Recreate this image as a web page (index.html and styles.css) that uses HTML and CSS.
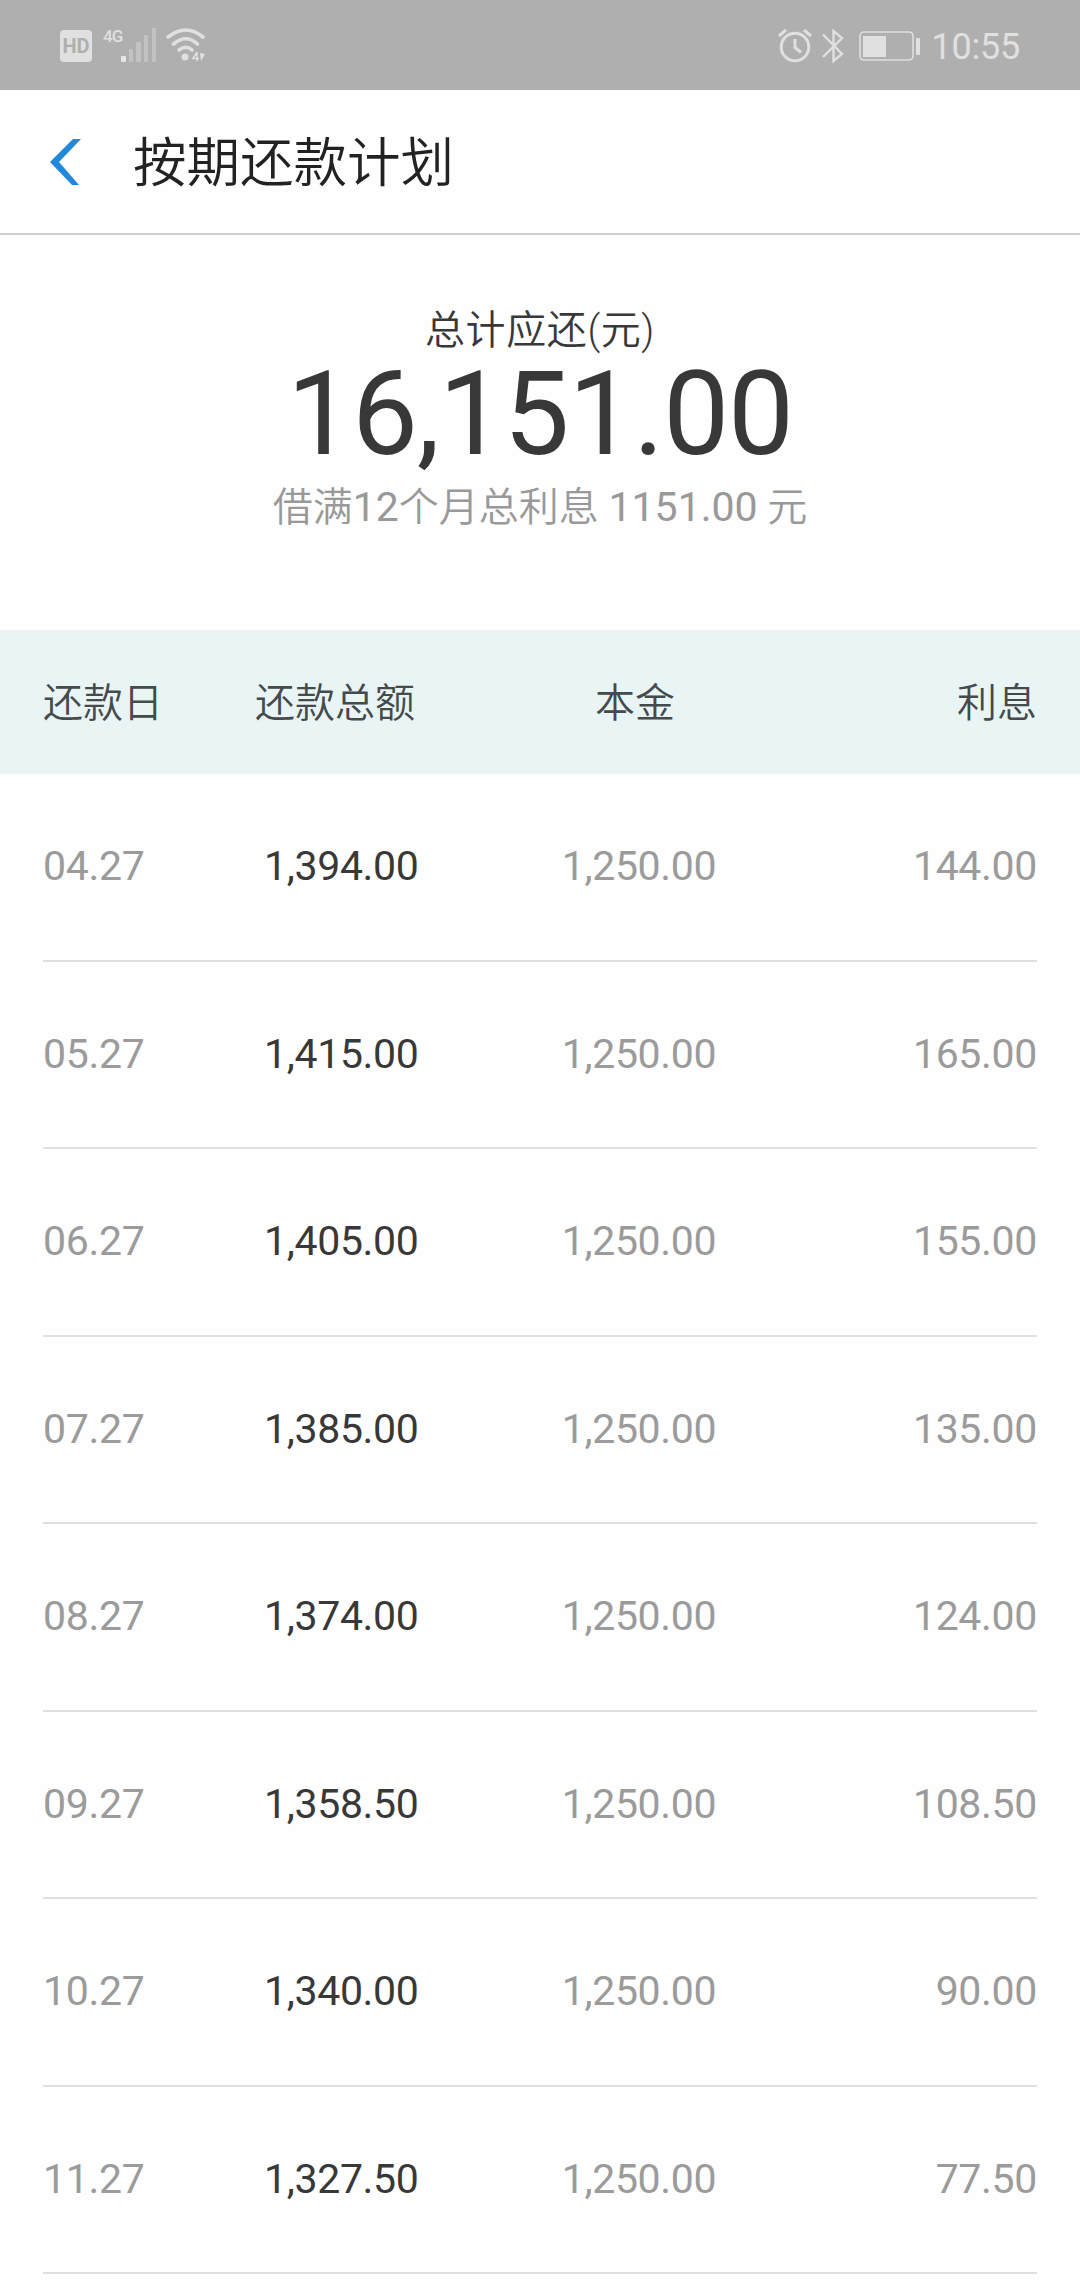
FILE: index.html
```html
<!DOCTYPE html>
<html lang="zh-CN">
<head>
  <meta charset="UTF-8">
  <meta name="viewport" content="width=device-width, initial-scale=1.0">
  <title>按期还款计划</title>
  <link rel="stylesheet" href="styles.css">
</head>
<body>

  <!-- Status bar -->
  <div class="status-bar">
    <div class="status-left">
      <span class="hd-badge">HD</span>
      <div class="signal">
        <span class="network">4G</span>
        <svg width="36" height="34" viewBox="0 0 36 34">
          <rect class="on" x="0" y="28" width="5" height="6" rx="1"/>
          <rect x="8" y="21" width="4" height="13"/>
          <rect x="15" y="14" width="5" height="20"/>
          <rect x="23" y="7" width="4" height="27"/>
          <rect x="31" y="0" width="4" height="34"/>
        </svg>
      </div>
      <svg class="wifi" width="40" height="34" viewBox="0 0 40 34">
        <g fill="none" stroke="#e0e0e0" stroke-width="3.6" stroke-linecap="round">
          <path d="M2 9Q20 -5 37 9"/>
          <path d="M7.500 16Q20 5.500 31.500 16"/>
          <path d="M13 22Q20 16.500 26 22"/>
        </g>
        <circle cx="19" cy="29" r="3.500" fill="#e0e0e0"/>
        <path d="M31 24v9M31 24l-4 6.500h6" fill="none" stroke="#e0e0e0" stroke-width="1.500"/>
        <path d="M34 25l5 1-4 7z" fill="#e0e0e0"/>
      </svg>
    </div>
    <div class="status-right">
      <svg class="alarm" width="34" height="36" viewBox="0 0 34 36">
        <g fill="none" stroke="#e0e0e0" stroke-width="3">
          <circle cx="17" cy="19" r="13.800"/>
          <path d="M17 11v8.500l6 5M1 8l7-6M33 8l-7-6"/>
        </g>
      </svg>
      <svg class="bluetooth" width="22" height="36" viewBox="0 0 22 36">
        <path d="M1 6.500L20 26 11.500 33V3L20 10 1 29" fill="none" stroke="#e0e0e0" stroke-width="2.400"/>
      </svg>
      <svg class="battery" width="62" height="30" viewBox="0 0 62 30">
        <rect x="1" y="1" width="53" height="28" rx="4" fill="none" stroke="#e0e0e0" stroke-width="1.600"/>
        <rect x="4" y="5" width="23" height="21" fill="#e0e0e0"/>
        <rect x="57" y="7" width="4" height="17" rx="1" fill="#e0e0e0"/>
      </svg>
      <span class="clock">10:55</span>
    </div>
  </div>

  <!-- Title bar -->
  <div class="title-bar">
    <svg class="back" width="32" height="48" viewBox="0 0 32 48">
      <path d="M31 1L9 24 29 47H22L0 24 23 1z" fill="#2089dc"/>
    </svg>
    <h1>按期还款计划</h1>
  </div>

  <!-- Total -->
  <div class="summary">
    <p class="summary-label">总计应还(元)</p>
    <p class="summary-amount">16,151.00</p>
    <p class="summary-note">借满<span>12</span>个月总利息 <span>1151.00</span> 元</p>
  </div>

  <!-- Repayment plan -->
  <div class="plan-head">
    <span>还款日</span>
    <span class="total">还款总额</span>
    <span class="principal">本金</span>
    <span class="interest">利息</span>
  </div>
  <div class="plan-list">
    <div class="plan-row">
      <span>04.27</span>
      <span class="total">1,394.00</span>
      <span class="principal">1,250.00</span>
      <span class="interest">144.00</span>
    </div>
    <div class="plan-row">
      <span>05.27</span>
      <span class="total">1,415.00</span>
      <span class="principal">1,250.00</span>
      <span class="interest">165.00</span>
    </div>
    <div class="plan-row">
      <span>06.27</span>
      <span class="total">1,405.00</span>
      <span class="principal">1,250.00</span>
      <span class="interest">155.00</span>
    </div>
    <div class="plan-row">
      <span>07.27</span>
      <span class="total">1,385.00</span>
      <span class="principal">1,250.00</span>
      <span class="interest">135.00</span>
    </div>
    <div class="plan-row">
      <span>08.27</span>
      <span class="total">1,374.00</span>
      <span class="principal">1,250.00</span>
      <span class="interest">124.00</span>
    </div>
    <div class="plan-row">
      <span>09.27</span>
      <span class="total">1,358.50</span>
      <span class="principal">1,250.00</span>
      <span class="interest">108.50</span>
    </div>
    <div class="plan-row">
      <span>10.27</span>
      <span class="total">1,340.00</span>
      <span class="principal">1,250.00</span>
      <span class="interest">90.00</span>
    </div>
    <div class="plan-row">
      <span>11.27</span>
      <span class="total">1,327.50</span>
      <span class="principal">1,250.00</span>
      <span class="interest">77.50</span>
    </div>
  </div>

</body>
</html>
```
FILE: styles.css
```css
* {
  box-sizing: border-box;
}

body {
  margin: 0;
  height: 2280px;
  overflow: hidden;
  background-color: #fefefe;
  color: #383838;
  font-family: Roboto, "Noto Sans CJK SC", sans-serif;
}

p,
h1 {
  margin: 0;
}

/* Status bar */
.status-bar {
  display: flex;
  justify-content: space-between;
  height: 90px;
  padding: 28px 60px 0 60px;
  background-color: #afafaf;
  color: #e0e0e0;
}

.status-left,
.status-right {
  display: flex;
  align-items: flex-start;
}

.hd-badge {
  width: 32px;
  height: 32px;
  margin-top: 2px;
  border-radius: 4px;
  background-color: #e0e0e0;
  color: #afafaf;
  font-size: 20px;
  font-weight: 700;
  line-height: 32px;
  text-align: center;
}

.signal {
  display: flex;
  margin-left: 11px;
}

.network {
  width: 18px;
  font-size: 17px;
  font-weight: 500;
  line-height: 16px;
  letter-spacing: -1px;
}

.signal rect {
  fill: #c2c2c2;
}

.signal .on {
  fill: #e6e6e6;
}

.wifi {
  margin-left: 9px;
}

.bluetooth {
  margin-left: 10px;
}

.battery {
  margin: 3px 0 0 15px;
}

.clock {
  margin-left: 10px;
  font-size: 36px;
  line-height: 38px;
  letter-spacing: -0.2px;
}

/* Title bar */
.title-bar {
  display: flex;
  align-items: center;
  height: 145px;
  padding-left: 50px;
  border-bottom: 2px solid #d0d0d0;
}

.title-bar h1 {
  margin-left: 51px;
  padding-bottom: 6px;
  color: #222;
  font-size: 53.5px;
  font-weight: 350;
}

/* Summary */
.summary {
  height: 395px;
  padding-top: 72px;
  text-align: center;
}

.summary-label {
  font-size: 40px;
  font-weight: 350;
  line-height: 48px;
  letter-spacing: 0.6px;
}

.summary-amount {
  font-size: 117.5px;
  line-height: 118px;
  letter-spacing: -0.01em;
}

.summary-note {
  margin-top: 8px;
  color: #999;
  font-size: 40px;
  font-weight: 350;
  line-height: 52px;
}

.summary-note span {
  font-size: 41px;
  font-weight: 400;
}

/* Plan table */
.plan-head,
.plan-row {
  display: grid;
  grid-template-columns: 212px 190px 1fr 212px;
  align-items: center;
}

.plan-head {
  height: 144px;
  padding: 0 43px 4px;
  background-color: #e9f4f5;
  color: #454a4c;
  font-size: 40px;
  font-weight: 350;
}

.plan-list {
  padding: 0 43px;
}

.plan-row {
  height: 187.5px;
  padding-bottom: 1px;
  border-bottom: 2px solid #e0e0e0;
  color: #9b9b9b;
  font-size: 41px;
  letter-spacing: -0.008em;
}

.principal {
  text-align: center;
}

.interest {
  text-align: right;
}

.plan-row .total {
  padding-left: 9px;
  color: #383838;
}

.plan-row .principal {
  padding-left: 8px;
}
```
